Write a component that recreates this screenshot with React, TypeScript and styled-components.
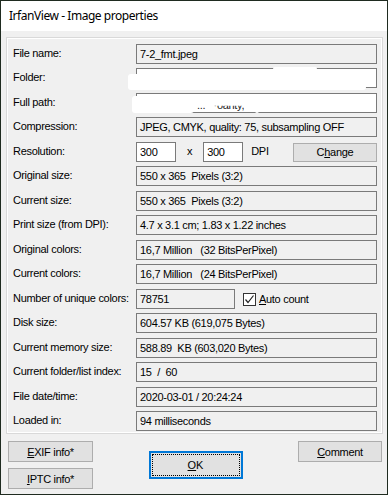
import React from "react";
import styled, { createGlobalStyle } from "styled-components";

const GlobalStyle = createGlobalStyle`
  html, body { margin: 0; padding: 0; background: #f0f0f0; }
  * { box-sizing: border-box; }
`;

const Window = styled.div`
  width: 388px;
  height: 495px;
  border: 1px solid #1f2b20;
  background: #f0f0f0;
  display: flex;
  flex-direction: column;
  font-family: "Liberation Sans", Arial, sans-serif;
  font-size: 11px;
  letter-spacing: -0.3px;
  color: #000;
  overflow: hidden;
`;

const TitleBar = styled.div`
  height: 30px;
  flex: none;
  background: #fff;
  display: flex;
  align-items: center;
  padding-left: 8px;
  padding-bottom: 1px;
  font-family: "Noto Sans", "Open Sans", sans-serif;
  font-size: 12px;
  letter-spacing: -0.45px;
`;

const Body = styled.div`
  padding: 6px 4px 0 5px;
`;

const Group = styled.div`
  border: 1px solid #d9d9d9;
  box-shadow: inset 0 0 0 1px #fff;
  padding: 6px 5px 2px 6px;
  display: grid;
  grid-template-columns: 123px 1fr;
  grid-auto-rows: 20px;
  row-gap: 4.47px;
`;

const Label = styled.div`
  line-height: 18px;
  white-space: nowrap;
`;

const Field = styled.div<{ $width?: number; $white?: boolean }>`
  position: relative;
  height: 20px;
  width: ${(p) => (p.$width ? `${p.$width}px` : "auto")};
  border: 1px solid #7a7a7a;
  background: ${(p) => (p.$white ? "#fff" : "#f0f0f0")};
  padding: 0 3px;
  line-height: 18px;
  white-space: pre;
`;

const Redaction = styled.div<{ $l: number; $t: number; $w: number; $h: number }>`
  position: absolute;
  left: ${(p) => p.$l}px;
  top: ${(p) => p.$t}px;
  width: ${(p) => p.$w}px;
  height: ${(p) => p.$h}px;
  background: #fff;
  border-radius: 3px;
`;

const Remnant = styled.span`
  position: absolute;
  left: 60px;
  top: 4px;
  line-height: 14px;
  color: #222;
  clip-path: inset(55% 0 0 0);
`;

const Row = styled.div`
  display: flex;
  align-items: flex-start;
`;

const Plain = styled.span<{ $ml: number }>`
  margin-left: ${(p) => p.$ml}px;
  line-height: 18px;
`;

const Button = styled.button<{ $w?: number; $h?: number }>`
  width: ${(p) => (p.$w ? `${p.$w}px` : "100%")};
  height: ${(p) => p.$h ?? 21}px;
  border: 1px solid #adadad;
  background: #e1e1e1;
  font-family: "Liberation Sans", Arial, sans-serif;
  font-size: 11px;
  letter-spacing: -0.3px;
  color: #000;
  padding: 0;
  margin: 0;
  display: flex;
  align-items: center;
  justify-content: center;
`;

const ChangeButton = styled(Button)`
  margin-left: auto;
  margin-top: 1px;
`;

const CheckWrap = styled.label`
  display: flex;
  align-items: center;
  margin-left: 8px;
  margin-top: 4px;
  gap: 3px;
  line-height: 13px;
`;

const CheckBox = styled.span`
  width: 13px;
  height: 13px;
  border: 1px solid #333;
  background: #fff;
  display: flex;
  align-items: center;
  justify-content: center;
`;

const ButtonArea = styled.div`
  display: grid;
  grid-template-columns: 85px 1fr 84px;
  padding: 7px 5px 0 7px;
`;

const LeftCol = styled.div`
  display: flex;
  flex-direction: column;
  gap: 6px;
`;

const MiddleCol = styled.div`
  display: flex;
  justify-content: center;
  align-items: flex-start;
`;

const OkButton = styled.button`
  margin-top: 10px;
  width: 94px;
  height: 28px;
  border: 2px solid #0078d7;
  background: #e1e1e1;
  padding: 1px;
  font-family: "Liberation Sans", Arial, sans-serif;
  font-size: 11px;
  color: #000;
`;

const Focus = styled.span`
  display: flex;
  align-items: center;
  justify-content: center;
  width: 100%;
  height: 100%;
  border: 1px dotted #000;
`;

const rows: [string, string][] = [
  ["Original size:", "550 x 365  Pixels (3:2)"],
  ["Current size:", "550 x 365  Pixels (3:2)"],
  ["Print size (from DPI):", "4.7 x 3.1 cm; 1.83 x 1.22 inches"],
  ["Original colors:", "16,7 Million   (32 BitsPerPixel)"],
  ["Current colors:", "16,7 Million   (24 BitsPerPixel)"],
];

const rows2: [string, string][] = [
  ["Disk size:", "604.57 KB (619,075 Bytes)"],
  ["Current memory size:", "588.89  KB (603,020 Bytes)"],
  ["Current folder/list index:", "15  /  60"],
  ["File date/time:", "2020-03-01 / 20:24:24"],
  ["Loaded in:", "94 milliseconds"],
];

export default function App() {
  return (
    <>
      <GlobalStyle />
      <Window>
        <TitleBar>IrfanView - Image properties</TitleBar>
        <Body>
          <Group>
            <Label>File name:</Label>
            <Field>7-2_fmt.jpeg</Field>

            <Label>Folder:</Label>
            <Field $white>
              <Redaction $l={136} $t={-2} $w={44} $h={4} />
              <Redaction $l={-9} $t={5} $w={238} $h={16} />
            </Field>

            <Label>Full path:</Label>
            <Field $white>
              <Remnant>...   ·oanty,</Remnant>
              <Redaction $l={-5} $t={2} $w={62} $h={17} />
              <Redaction $l={118} $t={14} $w={4} $h={5} />
            </Field>

            <Label>Compression:</Label>
            <Field>JPEG, CMYK, quality: 75, subsampling OFF</Field>

            <Label>Resolution:</Label>
            <Row>
              <Field $width={40} $white>300</Field>
              <Plain $ml={11}>x</Plain>
              <Field $width={40} $white style={{ marginLeft: 11 }}>300</Field>
              <Plain $ml={8}>DPI</Plain>
              <ChangeButton $w={84} $h={19}>
                C<u>h</u>ange
              </ChangeButton>
            </Row>

            {rows.map(([l, v]) => (
              <React.Fragment key={l}>
                <Label>{l}</Label>
                <Field>{v}</Field>
              </React.Fragment>
            ))}

            <Label>Number of unique colors:</Label>
            <Row>
              <Field $width={99}>78751</Field>
              <CheckWrap>
                <CheckBox>
                  <svg width="11" height="11" viewBox="0 0 11 11">
                    <path d="M1.5 5.5 L4 8.5 L9.5 1.5" fill="none" stroke="#222" strokeWidth="1.2" />
                  </svg>
                </CheckBox>
                <span>
                  <u>A</u>uto count
                </span>
              </CheckWrap>
            </Row>

            {rows2.map(([l, v]) => (
              <React.Fragment key={l}>
                <Label>{l}</Label>
                <Field>{v}</Field>
              </React.Fragment>
            ))}
          </Group>
        </Body>
        <ButtonArea>
          <LeftCol>
            <Button>
              <u>E</u>XIF info*
            </Button>
            <Button>
              <u>I</u>PTC info*
            </Button>
          </LeftCol>
          <MiddleCol>
            <OkButton>
              <Focus>
                <u>O</u>K
              </Focus>
            </OkButton>
          </MiddleCol>
          <div>
            <Button>
              <u>C</u>omment
            </Button>
          </div>
        </ButtonArea>
      </Window>
    </>
  );
}
